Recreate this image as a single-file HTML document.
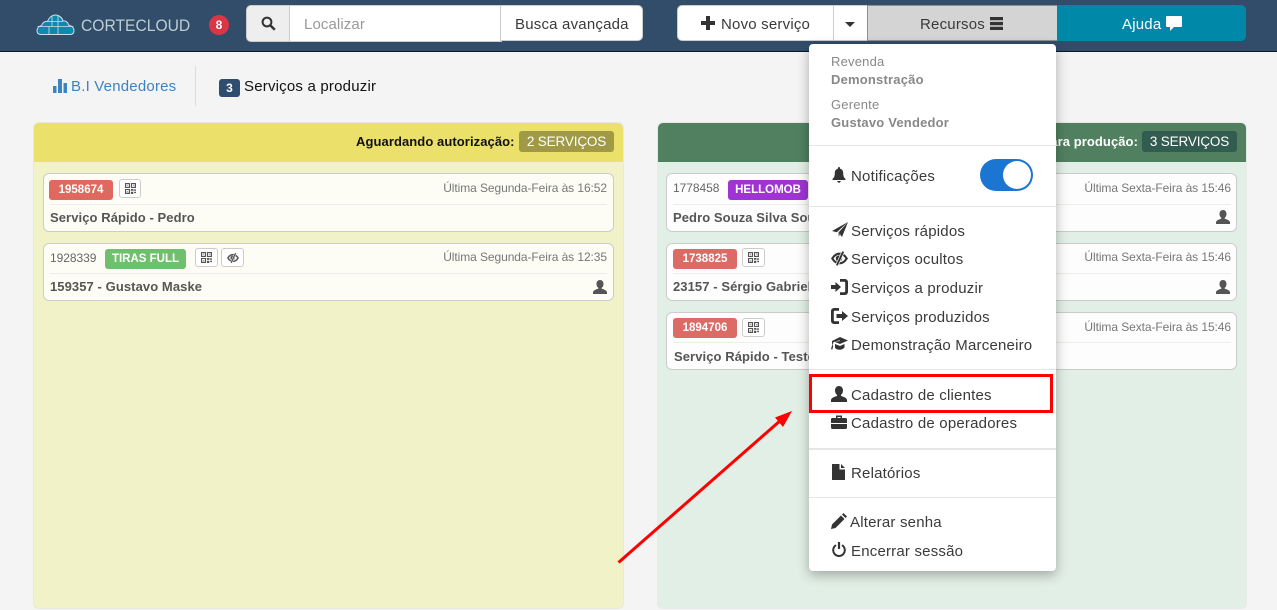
<!DOCTYPE html>
<html lang="pt-BR"><head><meta charset="utf-8"><title>CorteCloud</title>
<style>
*{box-sizing:border-box}
html,body{margin:0;padding:0}
body{width:1277px;height:610px;overflow:hidden;position:relative;background:#f4f4f4;font-family:"Liberation Sans",sans-serif;font-size:14px;color:#333}
.a{position:absolute}
.t{position:absolute;white-space:nowrap;line-height:20px;height:20px}
.m{font-size:15px;letter-spacing:.2px;color:#3a3a3a;margin-top:1px}
.s{font-size:13px;letter-spacing:.2px;color:#888;margin-top:1px}
.b{font-weight:bold}
.time{font-size:12px;color:#777;text-align:right;letter-spacing:-.08px}
.name{font-size:13px;font-weight:bold;color:#555;letter-spacing:.08px;margin-top:1px}
.num{font-size:12px;color:#666;letter-spacing:-.05px}
.card{position:absolute;border:1px solid #ccc;border-radius:6px}
.div{position:absolute;height:1px;background:#eeeee8}
.lab{position:absolute;height:20px;line-height:21px;border-radius:3px;color:#fff;font-weight:bold;font-size:11.5px;text-align:center;letter-spacing:0}
.qr{position:absolute;width:23px;height:19px;border:1px solid #ccc;border-radius:3px;background:#fff}
.qr svg{position:absolute;left:5px;top:3px}
.hd{position:absolute;background:#e6e6e6;left:809px;width:247px;height:1px}
.ic{position:absolute;fill:#333;color:#333}
.pill{position:absolute;width:95px;height:21px;border-radius:3px;color:#fff;font-size:13.5px;line-height:21px;text-align:center;letter-spacing:-.15px}
</style></head><body>
<svg width="0" height="0" style="position:absolute">
<defs>
<symbol id="user" viewBox="0 0 16 16"><path d="M8 0C5.500 0 4 2 4 4.500c0 2 .8 3.500 2 4.300V10c-2.500.8-5.500 1.500-6 4v2h16v-2c-.5-2.500-3.500-3.200-6-4V8.800c1.200-.8 2-2.300 2-4.300C12 2 10.500 0 8 0z"/></symbol>
<symbol id="qr" viewBox="0 0 12 12"><path fill="#555" d="M0 0h5.500v5.500H0zM1.200 1.200v3h3v-3zM6.500 0h5.500v5.500H6.500zM7.700 1.200v3h3v-3zM0 6.500h5.500V12H0zM1.200 7.700v3h3v-3zM2 2h1v1H2zM9 2h1v1H9zM2 9h1v1H2zM6.500 6.500h2.500v2H6.500zM9.500 7h2.500v1.500H9.500zM6.500 9.500h2.500V12H6.500zM10 9.500h2V11h-2z"/></symbol>
<symbol id="eye" viewBox="0 0 16 16"><path d="M1.200 8C3 5 5.500 3.500 8 3.500S13 5 14.800 8C13 11 10.500 12.500 8 12.500S3 11 1.200 8z" fill="none" stroke="currentColor" stroke-width="2"/><circle cx="7.500" cy="8" r="3" fill="currentColor"/><path d="M11.500 1.500L5.500 14.500" stroke="#fff" stroke-width="3"/><path d="M11.500 1.500L5.500 14.500" stroke="currentColor" stroke-width="1.800"/></symbol>
</defs></svg>

<!-- NAVBAR -->
<div class="a" style="left:0;top:0;width:1277px;height:52px;background:#314d6a;border-bottom:1px solid #0d1722"></div>
<svg class="a" style="left:36px;top:14px" width="39" height="22" viewBox="0 0 39 22">
<path d="M1 17c0-3 2-5 4.500-5.500C6.500 8.500 9 7 11.500 7.500 13 3.500 16 1 19.500 1c3.500 0 6.500 2.500 7.500 6 2.500-.5 5 1 5.500 4 3 .5 5.500 2.800 5.500 5.500 0 2.500-1.500 4-4 4H4.500C2.500 20.500 1 19 1 17z" fill="#1088ad" stroke="#cfdfe5" stroke-width="1"/>
<path d="M1.500 12.500h36M16 1.500v11M22 1.500v19M13 12.500v8M11 7.500h16" stroke="#cfdfe5" stroke-width=".8" fill="none"/>
</svg>
<div class="t" style="left:81px;top:16px;font-size:17px;color:#c0ccd4;transform:scaleX(.92);transform-origin:left center">CORTECLOUD</div>
<div class="a" style="left:209px;top:15px;width:20px;height:20px;border-radius:50%;background:#dc3545;color:#fff;font-weight:bold;font-size:12px;line-height:20px;text-align:center">8</div>

<div class="a" style="left:246px;top:5px;width:44px;height:37px;background:#eee;border:1px solid #ccc;border-radius:5px 0 0 5px"></div>
<svg class="a" style="left:261px;top:16px" width="15" height="15" viewBox="0 0 15 15"><circle cx="6" cy="6" r="4.400" fill="none" stroke="#333" stroke-width="2"/><path d="M9.500 9.500l4.300 4.300" stroke="#333" stroke-width="2.500"/></svg>
<div class="a" style="left:289px;top:5px;width:213px;height:37px;background:#fff;border:1px solid #ccc"></div>
<div class="t" style="left:304px;top:15px;font-size:15px;color:#999;letter-spacing:.1px">Localizar</div>
<div class="a" style="left:500px;top:5px;width:143px;height:36px;background:#fff;border:1px solid #ccc;border-radius:0 5px 5px 0"></div>
<div class="t m" style="left:515px;top:14px">Busca avançada</div>

<div class="a" style="left:677px;top:5px;width:157px;height:36px;background:#fff;border:1px solid #ccc;border-radius:5px 0 0 5px"></div>
<svg class="a" style="left:701px;top:16px" width="14" height="14" viewBox="0 0 14 14"><path d="M5 0h4v5h5v4H9v5H5V9H0V5h5z" fill="#333"/></svg>
<div class="t m" style="left:721px;top:14px">Novo serviço</div>
<div class="a" style="left:833px;top:5px;width:35px;height:36px;background:#fff;border:1px solid #ccc"></div>
<div class="a" style="left:845px;top:22px;border:5px solid transparent;border-top-color:#333;border-bottom:0"></div>
<div class="a" style="left:867px;top:5px;width:191px;height:36px;background:#d4d4d4;border:1px solid #8f8f8f"></div>
<div class="t m" style="left:920px;top:14px">Recursos</div>
<svg class="a" style="left:990px;top:17px" width="13" height="13" viewBox="0 0 13 13"><path d="M0 0h13v3.300H0zM0 4.900h13v3.300H0zM0 9.700h13V13H0z" fill="#333"/></svg>
<div class="a" style="left:1057px;top:5px;width:189px;height:36px;background:#0088a9;border-radius:0 5px 5px 0"></div>
<div class="t" style="left:1122px;top:15px;color:#fff;font-size:15px;letter-spacing:.2px">Ajuda</div>
<svg class="a" style="left:1166px;top:16px" width="16" height="15" viewBox="0 0 16 15"><path d="M1 0h14a1 1 0 0 1 1 1v9a1 1 0 0 1-1 1H8l-4 4v-4H1a1 1 0 0 1-1-1V1a1 1 0 0 1 1-1z" fill="#fff"/></svg>

<!-- SUBNAV -->
<svg class="a" style="left:53px;top:79px" width="14" height="14" viewBox="0 0 14 14"><path d="M0 7h3.500v7H0zM5 0h4v14H5zM10.500 4H14v10h-3.500z" fill="#3d82c4"/></svg>
<div class="t" style="left:71px;top:77px;font-size:15px;letter-spacing:.2px;color:#3d82c4">B.I Vendedores</div>
<div class="a" style="left:195px;top:66px;width:1px;height:40px;background:#ddd"></div>
<div class="a" style="left:219px;top:79px;width:21px;height:18px;border-radius:3px;background:#2f4d6e;color:#fff;font-weight:bold;font-size:12px;line-height:18px;text-align:center">3</div>
<div class="t" style="left:244px;top:77px;font-size:15px;letter-spacing:.2px;color:#111">Serviços a produzir</div>

<!-- LEFT PANEL -->
<div class="a" style="left:34px;top:123px;width:589px;height:485px;background:#f2f2c8;box-shadow:0 0 0 1px #e8e8dc;border-radius:5px;overflow:hidden">
 <div class="a" style="left:0;top:0;width:100%;height:39px;background:#ebe06a"></div>
</div>
<div class="t b" style="left:356px;top:132px;font-size:13px;letter-spacing:.08px;color:#111">Aguardando autorização:</div>
<div class="pill" style="left:519px;top:131px;background:#a09a47">2 SERVIÇOS</div>

<div class="card" style="left:43px;top:173px;width:571px;height:59px;background:#fdfdf6"></div>
<div class="div" style="left:50px;top:204px;width:557px"></div>
<div class="lab" style="left:49px;top:180px;width:64px;background:#e0695f">1958674</div>
<div class="qr" style="left:119px;top:179px;width:22px"><svg width="11" height="11"><use href="#qr"/></svg></div>
<div class="t time" style="right:670px;top:178px">Última Segunda-Feira às 16:52</div>
<div class="t name" style="left:50px;top:207px">Serviço Rápido - Pedro</div>

<div class="card" style="left:43px;top:243px;width:571px;height:58px;background:#fdfdf6"></div>
<div class="div" style="left:50px;top:273px;width:557px"></div>
<div class="t num" style="left:50px;top:248px">1928339</div>
<div class="lab" style="left:105px;top:249px;width:81px;background:#6fc06d">TIRAS FULL</div>
<div class="qr" style="left:195px;top:248px"><svg width="11" height="11"><use href="#qr"/></svg></div>
<div class="qr" style="left:221px;top:248px"><svg width="12" height="12" style="color:#555"><use href="#eye"/></svg></div>
<div class="t time" style="right:670px;top:247px">Última Segunda-Feira às 12:35</div>
<div class="t name" style="left:50px;top:276px">159357 - Gustavo Maske</div>
<svg class="a" style="left:593px;top:280px;fill:#555" width="14" height="14"><use href="#user"/></svg>

<!-- RIGHT PANEL -->
<div class="a" style="left:658px;top:123px;width:588px;height:485px;background:#e2efe6;box-shadow:0 0 0 1px #e4eae6;border-radius:5px;overflow:hidden">
 <div class="a" style="left:0;top:0;width:100%;height:39px;background:#518060"></div>
</div>
<div class="t b" style="right:139px;top:132px;font-size:13px;letter-spacing:.08px;color:#fff">Aguardando para produção:</div>
<div class="pill" style="left:1142px;top:131px;background:#335c50">3 SERVIÇOS</div>

<div class="card" style="left:666px;top:173px;width:571px;height:59px;background:#fcfdfc"></div>
<div class="div" style="left:673px;top:204px;width:558px"></div>
<div class="t num" style="left:673px;top:178px">1778458</div>
<div class="lab" style="left:728px;top:180px;width:80px;background:#a033d4">HELLOMOB</div>
<div class="t time" style="right:46px;top:178px">Última Sexta-Feira às 15:46</div>
<div class="t name" style="left:673px;top:207px">Pedro Souza Silva Souza</div>
<svg class="a" style="left:1216px;top:210px;fill:#555" width="14" height="14"><use href="#user"/></svg>

<div class="card" style="left:666px;top:243px;width:571px;height:58px;background:#fcfdfc"></div>
<div class="div" style="left:673px;top:273px;width:558px"></div>
<div class="lab" style="left:673px;top:249px;width:64px;background:#dc6b66">1738825</div>
<div class="qr" style="left:742px;top:248px"><svg width="11" height="11"><use href="#qr"/></svg></div>
<div class="t time" style="right:46px;top:247px">Última Sexta-Feira às 15:46</div>
<div class="t name" style="left:673px;top:276px">23157 - Sérgio Gabriel</div>
<svg class="a" style="left:1216px;top:280px;fill:#555" width="14" height="14"><use href="#user"/></svg>

<div class="card" style="left:666px;top:312px;width:571px;height:58px;background:#fcfdfc"></div>
<div class="div" style="left:673px;top:342px;width:558px"></div>
<div class="lab" style="left:673px;top:318px;width:64px;background:#dc6b66">1894706</div>
<div class="qr" style="left:742px;top:318px"><svg width="11" height="11"><use href="#qr"/></svg></div>
<div class="t time" style="right:46px;top:317px">Última Sexta-Feira às 15:46</div>
<div class="t name" style="left:674px;top:346px">Serviço Rápido - Teste</div>

<!-- DROPDOWN -->
<div class="a" style="left:809px;top:44px;width:247px;height:527px;background:#fff;border-radius:4px;box-shadow:0 4px 12px rgba(0,0,0,.3)"></div>
<div class="t s" style="left:831px;top:51px">Revenda</div>
<div class="t s b" style="left:831px;top:69px">Demonstração</div>
<div class="t s" style="left:831px;top:94px">Gerente</div>
<div class="t s b" style="left:831px;top:112px">Gustavo Vendedor</div>
<div class="hd" style="top:145px"></div>
<svg class="a" style="left:832px;top:167px" width="14" height="16" viewBox="0 0 14 16"><path d="M7 0c.6 0 1 .4 1 1v.6c2 .5 3.200 2.200 3.200 4.400 0 3 .7 4.500 2.300 6v1H.5v-1C2.100 10.500 2.800 9 2.800 6c0-2.200 1.200-3.900 3.200-4.400V1c0-.6.400-1 1-1zM5.300 14h3.400c0 1-.7 1.700-1.700 1.700S5.300 15 5.300 14z" fill="#333"/></svg>
<div class="t m" style="left:851px;top:166px">Notificações</div>
<div class="a" style="left:980px;top:159px;width:53px;height:32px;border-radius:16px;background:#1b76d3"></div>
<div class="a" style="left:1003px;top:161px;width:28px;height:28px;border-radius:50%;background:#fff"></div>
<div class="hd" style="top:206px"></div>

<svg class="a" style="left:832px;top:222px" width="16" height="15" viewBox="0 0 16 15"><path d="M16 0L0 9l4.800 1.200zM16 0L6.500 10.500 10 15z" fill="#333"/><path d="M6.500 10.500v4l2.200-2.500z" fill="#666"/></svg>
<div class="t m" style="left:851px;top:221px">Serviços rápidos</div>
<svg class="a ic" style="left:831px;top:250px" width="17" height="17"><use href="#eye"/></svg>
<div class="t m" style="left:851px;top:249px">Serviços ocultos</div>
<svg class="a" style="left:831px;top:279px" width="17" height="16" viewBox="0 0 17 16"><path d="M0 6h4.500V3L10 8l-5.500 5v-3H0zM9 0h5A3 3 0 0 1 17 3v10a3 3 0 0 1-3 3H9v-2.800h4.300a.9.900 0 0 0 .9-.9V3.700a.9.900 0 0 0-.9-.9H9z" fill="#333"/></svg>
<div class="t m" style="left:851px;top:278px">Serviços a produzir</div>
<svg class="a" style="left:831px;top:308px" width="17" height="16" viewBox="0 0 17 16"><path d="M8 0H3A3 3 0 0 0 0 3v10a3 3 0 0 0 3 3h5v-2.800H3.700a.9.900 0 0 1-.9-.9V3.700a.9.900 0 0 1 .9-.9H8zM5.500 6H11V3l6 5-6 5v-3H5.500z" fill="#333"/></svg>
<div class="t m" style="left:851px;top:307px">Serviços produzidos</div>
<svg class="a" style="left:831px;top:337px" width="17" height="14" viewBox="0 0 17 14"><path d="M9 0l8 3.500-8 3.500-5.500-2.300L9 4 8.500 3.300 2.500 5 1.700 8l.5 1-.8 3.500-1.400-.2.900-3.300.4-1L1 5.500V4zM4 7l5 2 4.500-2v3.500C12 12 10.500 12.800 8.500 12.800c-1.800 0-3.200-.6-4.500-1.800z" fill="#333"/></svg>
<div class="t m" style="left:851px;top:335px">Demonstração Marceneiro</div>
<div class="hd" style="top:369px"></div>

<svg class="a ic" style="left:831px;top:386px" width="16" height="16"><use href="#user"/></svg>
<div class="t m" style="left:851px;top:385px">Cadastro de clientes</div>
<svg class="a" style="left:831px;top:414px" width="16" height="16" viewBox="0 0 16 16"><path d="M5 1.500h6V4h3.500A1.500 1.500 0 0 1 16 5.500V9H0V5.500A1.500 1.500 0 0 1 1.500 4H5zM6.500 3v1h3V3zM0 10h16v3.500a1.500 1.500 0 0 1-1.500 1.500h-13A1.500 1.500 0 0 1 0 13.500z" fill="#333"/></svg>
<div class="t m" style="left:851px;top:413px">Cadastro de operadores</div>
<div class="hd" style="top:448px;height:2px"></div>

<svg class="a" style="left:832px;top:464px" width="13" height="16" viewBox="0 0 13 16"><path d="M0 0h7.500v5.500H13V16H0zM9 0l4 4H9z" fill="#333"/></svg>
<div class="t m" style="left:851px;top:463px">Relatórios</div>
<div class="hd" style="top:497px"></div>

<svg class="a" style="left:831px;top:513px" width="16" height="16" viewBox="0 0 16 16"><path d="M12.500 0L16 3.500 14.500 5 11 1.500zM10 2.500L13.500 6 4.500 15 0 16l1-4.500z" fill="#333"/></svg>
<div class="t m" style="left:850px;top:512px">Alterar senha</div>
<svg class="a" style="left:832px;top:542px" width="14" height="15" viewBox="0 0 14 15"><path d="M4 3.200A5.800 5.800 0 1 0 10 3.200" fill="none" stroke="#333" stroke-width="2"/><path d="M7 0v7" stroke="#333" stroke-width="2.200"/></svg>
<div class="t m" style="left:851px;top:541px">Encerrar sessão</div>

<!-- ANNOTATIONS -->
<div class="a" style="left:809px;top:374px;width:244px;height:39px;border:3px solid #f00"></div>
<svg class="a" style="left:0;top:0" width="1277" height="610">
<path d="M618.500 562.500L781 420" stroke="#f00" stroke-width="3" fill="none"/>
<path d="M792 411L775 417.500L783 427z" fill="#f00"/>
</svg>
</body></html>
